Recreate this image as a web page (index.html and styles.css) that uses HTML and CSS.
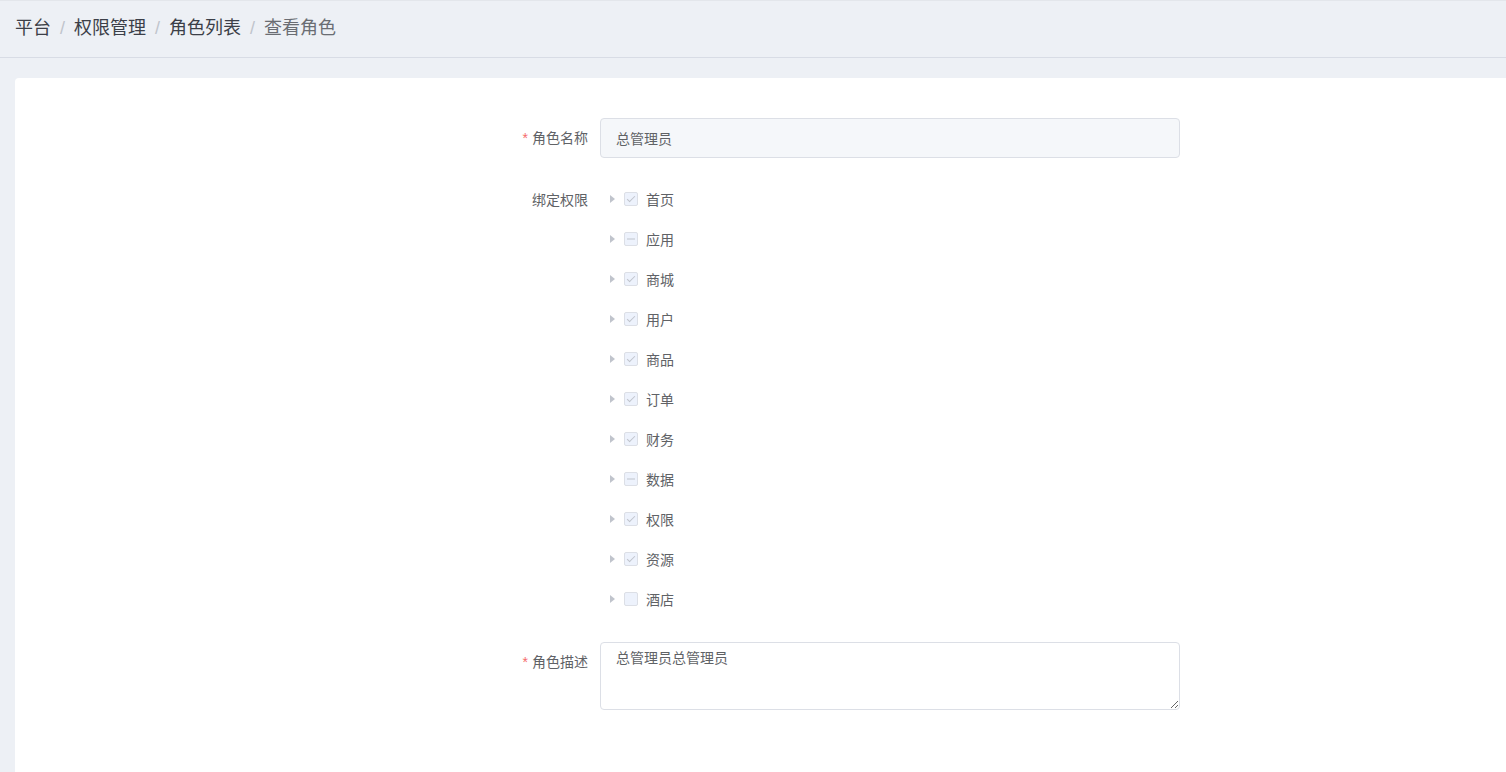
FILE: index.html
```html
<!DOCTYPE html>
<html lang="zh-CN">
<head>
<meta charset="utf-8">
<title>查看角色</title>
<link rel="stylesheet" href="styles.css">
</head>
<body>
<header class="topbar">
  <nav class="breadcrumb">
    <span class="crumb">平台</span><span class="sep">/</span>
    <span class="crumb">权限管理</span><span class="sep">/</span>
    <span class="crumb">角色列表</span><span class="sep">/</span>
    <span class="crumb current">查看角色</span>
  </nav>
</header>
<main class="main">
  <section class="card">
    <form class="form">
      <div class="form-item">
        <label class="label required">角色名称</label>
        <div class="control">
          <input class="input" type="text" value="总管理员" disabled>
        </div>
      </div>
      <div class="form-item">
        <label class="label">绑定权限</label>
        <div class="control">
          <ul class="tree">
            <li class="node"><span class="caret"></span><span class="cb checked"></span><span class="node-label">首页</span></li>
            <li class="node"><span class="caret"></span><span class="cb partial"></span><span class="node-label">应用</span></li>
            <li class="node"><span class="caret"></span><span class="cb checked"></span><span class="node-label">商城</span></li>
            <li class="node"><span class="caret"></span><span class="cb checked"></span><span class="node-label">用户</span></li>
            <li class="node"><span class="caret"></span><span class="cb checked"></span><span class="node-label">商品</span></li>
            <li class="node"><span class="caret"></span><span class="cb checked"></span><span class="node-label">订单</span></li>
            <li class="node"><span class="caret"></span><span class="cb checked"></span><span class="node-label">财务</span></li>
            <li class="node"><span class="caret"></span><span class="cb partial"></span><span class="node-label">数据</span></li>
            <li class="node"><span class="caret"></span><span class="cb checked"></span><span class="node-label">权限</span></li>
            <li class="node"><span class="caret"></span><span class="cb checked"></span><span class="node-label">资源</span></li>
            <li class="node"><span class="caret"></span><span class="cb"></span><span class="node-label">酒店</span></li>
          </ul>
        </div>
      </div>
      <div class="form-item">
        <label class="label required">角色描述</label>
        <div class="control">
          <textarea class="textarea" readonly>总管理员总管理员</textarea>
        </div>
      </div>
    </form>
  </section>
</main>
</body>
</html>
```

FILE: styles.css
```css
* { box-sizing: border-box; }
html, body {
  margin: 0;
  padding: 0;
  height: 100%;
}
body {
  background: #edf0f5;
  font-family: "Liberation Sans", "Noto Sans CJK SC", sans-serif;
  color: #606266;
  overflow: hidden;
}
.topbar {
  height: 58px;
  border-top: 1px solid #e3e6eb;
  border-bottom: 1px solid #d8dce5;
  background: #edf0f5;
  display: flex;
  align-items: center;
  padding-left: 15px;
}
.breadcrumb {
  font-size: 18px;
  line-height: 1;
  display: flex;
  align-items: center;
  margin-top: -2px;
}
.crumb { color: #3c3f48; }
.crumb.current { color: #6a6d73; }
.sep {
  color: #c0c4cc;
  margin: 0 9px;
  font-size: 18px;
}
.main {
  padding: 20px 0 0 15px;
  height: calc(100% - 58px);
}
.card {
  background: #ffffff;
  border-radius: 4px 0 0 0;
  height: 100%;
  padding: 40px 0 0 0;
}
.form {
  margin-left: 485px;
  width: 680px;
}
.form-item {
  display: flex;
  margin-bottom: 22px;
}
.label {
  width: 100px;
  flex: none;
  text-align: right;
  padding-right: 12px;
  font-size: 14px;
  line-height: 40px;
  color: #606266;
}
.label.required::before {
  content: "*";
  color: #f56c6c;
  margin-right: 4px;
}
.control {
  flex: 1;
}
.input {
  display: block;
  width: 580px;
  height: 40px;
  padding: 0 15px;
  font-family: inherit;
  font-size: 14px;
  color: #606266;
  background: #f5f7fa;
  border: 1px solid #dcdfe6;
  border-radius: 4px;
  outline: none;
}
.tree {
  list-style: none;
  margin: 0;
  padding: 0;
}
.node {
  height: 40px;
  padding-bottom: 2px;
  display: flex;
  align-items: center;
  font-size: 14px;
  color: #606266;
}
.caret {
  width: 24px;
  height: 14px;
  flex: none;
  position: relative;
}
.caret::after {
  content: "";
  position: absolute;
  left: 10px;
  top: 3px;
  border-top: 4px solid transparent;
  border-bottom: 4px solid transparent;
  border-left: 5px solid #c0c4cc;
}
.cb {
  width: 14px;
  height: 14px;
  flex: none;
  border: 1px solid #dcdfe6;
  border-radius: 2px;
  background: #edf2fc;
  margin-right: 8px;
  position: relative;
}
.cb.checked::after {
  content: "";
  position: absolute;
  left: 4px;
  top: 1px;
  width: 3px;
  height: 7px;
  border-right: 1px solid #c0c4cc;
  border-bottom: 1px solid #c0c4cc;
  transform: rotate(45deg);
}
.cb.partial::after {
  content: "";
  position: absolute;
  left: 2px;
  right: 2px;
  top: 5px;
  height: 2px;
  background: #c0c4cc;
  transform: scaleY(0.5);
}
.textarea {
  display: block;
  width: 580px;
  height: 68px;
  padding: 5px 15px;
  font-family: inherit;
  font-size: 14px;
  line-height: 1.5;
  color: #606266;
  background: #ffffff;
  border: 1px solid #dcdfe6;
  border-radius: 4px;
  outline: none;
  resize: vertical;
}
```
